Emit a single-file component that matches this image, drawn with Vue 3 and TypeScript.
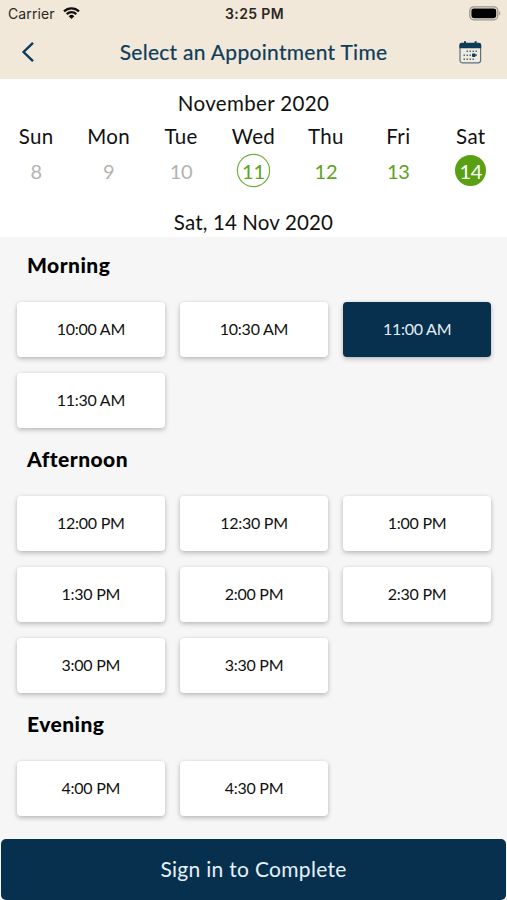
<script setup lang="ts">
import { ref } from 'vue'

interface Day {
  name: string
  date: number
  state: 'past' | 'today' | 'open' | 'selected'
}

interface Period {
  title: string
  slots: string[]
}

const days: Day[] = [
  { name: 'Sun', date: 8, state: 'past' },
  { name: 'Mon', date: 9, state: 'past' },
  { name: 'Tue', date: 10, state: 'past' },
  { name: 'Wed', date: 11, state: 'today' },
  { name: 'Thu', date: 12, state: 'open' },
  { name: 'Fri', date: 13, state: 'open' },
  { name: 'Sat', date: 14, state: 'selected' },
]

const periods: Period[] = [
  { title: 'Morning', slots: ['10:00 AM', '10:30 AM', '11:00 AM', '11:30 AM'] },
  {
    title: 'Afternoon',
    slots: ['12:00 PM', '12:30 PM', '1:00 PM', '1:30 PM', '2:00 PM', '2:30 PM', '3:00 PM', '3:30 PM'],
  },
  { title: 'Evening', slots: ['4:00 PM', '4:30 PM'] },
]

const selectedSlot = ref('11:00 AM')
</script>

<template>
  <div class="screen">
    <header class="top">
      <div class="status">
        <div class="carrier">
          <span>Carrier</span>
          <svg class="wifi" viewBox="0 0 17 12" width="17" height="12">
            <path d="M1 4.4a10.6 10.6 0 0 1 15 0" />
            <path d="M3.7 7.1a6.8 6.8 0 0 1 9.6 0" />
            <path class="dot" d="M8.5 12 5.7 9.2a4 4 0 0 1 5.6 0Z" />
          </svg>
        </div>
        <div class="clock">3:25 PM</div>
        <svg class="battery" viewBox="0 0 32 15" width="32" height="15">
          <rect x="0.8" y="0.8" width="28" height="13" rx="4" fill="none" stroke="#9b958b" stroke-width="1.3" />
          <rect x="2.4" y="2.4" width="24.8" height="9.8" rx="2.4" fill="#000" />
          <path d="M30.2 5v4.6c1.500-.8 1.500-3.800 0-4.600Z" fill="#9b958b" />
        </svg>
      </div>
      <div class="nav">
        <button class="icon-button" aria-label="Back">
          <svg viewBox="0 0 14 20" width="14" height="20">
            <path d="M12 .8 2.600 10l9.400 9.200" fill="none" stroke="#0d3c5a" stroke-width="2.4" />
          </svg>
        </button>
        <h1 class="title">Select an Appointment Time</h1>
        <button class="icon-button end" aria-label="Calendar">
          <svg viewBox="0 0 23 23" width="23" height="23">
            <rect x="1" y="2.5" width="20.6" height="19.3" rx="2.2" fill="#f1ebdf" stroke="#5b7281" stroke-width="1.2" />
            <path d="M.4 7.2V4A2.2 2.2 0 0 1 2.6 1.800h17.400A2.200 2.200 0 0 1 22.200 4v3.200Z" fill="#0d3c5a" />
            <path d="M6 .3v3M16.600.3v3" stroke="#0d3c5a" stroke-width="2" />
            <g stroke="#52697a" stroke-width="1.5" stroke-dasharray="1.5 1.5">
              <path d="M7.500 10.200h12" />
              <path d="M4.500 14.200h15" />
              <path d="M4.500 18.200h12" />
            </g>
            <rect x="13" y="12.500" width="3.600" height="3.400" rx=".8" fill="#0d3c5a" />
          </svg>
        </button>
      </div>
    </header>

    <section class="calendar">
      <div class="month">November 2020</div>
      <div class="week">
        <div v-for="day in days" :key="day.date" class="day">
          <span class="day-name">{{ day.name }}</span>
          <span class="date" :class="day.state">{{ day.date }}</span>
        </div>
      </div>
      <div class="chosen">Sat, 14 Nov 2020</div>
    </section>

    <main class="times">
      <section v-for="period in periods" :key="period.title" class="period">
        <h2 class="period-title">{{ period.title }}</h2>
        <div class="slots">
          <button
            v-for="slot in period.slots"
            :key="slot"
            class="slot"
            :class="{ active: slot === selectedSlot }"
            @click="selectedSlot = slot"
          >
            {{ slot }}
          </button>
        </div>
      </section>
    </main>

    <footer class="footer">
      <button class="complete">Sign in to Complete</button>
    </footer>
  </div>
</template>

<style>
body {
  margin: 0;
  background: #f6f6f6;
}
</style>

<style scoped>
.screen {
  display: flex;
  flex-direction: column;
  height: 900px;
  box-sizing: border-box;
  overflow: hidden;
  background: #f6f6f6;
  color: #111;
  font-family: Lato, 'Liberation Sans', sans-serif;
}

button {
  margin: 0;
  padding: 0;
  border: 0;
  background: none;
  font-family: inherit;
}

.top {
  flex: none;
  height: 79px;
  background: #f1e8d9;
}

.status {
  display: grid;
  grid-template-columns: 1fr auto 1fr;
  align-items: center;
  height: 27px;
  padding: 0 6px 0 8px;
  font-family: Inter, sans-serif;
  font-size: 14px;
  color: #2b2722;
}

.carrier {
  display: flex;
  align-items: center;
  gap: 8px;
  letter-spacing: 0.1px;
}

.wifi {
  margin-top: -1px;
}

.wifi path {
  fill: none;
  stroke: #111;
  stroke-width: 2.2;
}

.wifi .dot {
  fill: #111;
  stroke: none;
}

.clock {
  font-weight: 600;
  letter-spacing: 0.35px;
}

.battery {
  justify-self: end;
  margin-top: -1px;
}

.nav {
  display: grid;
  grid-template-columns: 60px 1fr 60px;
  align-items: center;
  height: 50px;
}

.icon-button {
  display: flex;
  padding-left: 21px;
}

.icon-button.end {
  padding-left: 12px;
}

.title {
  margin: 0;
  text-align: center;
  font-size: 21px;
  font-weight: 400;
  line-height: 28px;
  letter-spacing: 0.3px;
  color: #0d3c5a;
  -webkit-text-stroke: 0.2px #0d3c5a;
}

.calendar {
  flex: none;
  height: 158px;
  box-sizing: border-box;
  padding-top: 10px;
  background: #fff;
  text-align: center;
  font-size: 20.5px;
  line-height: 28px;
  letter-spacing: 0.35px;
}

.week {
  display: grid;
  grid-template-columns: repeat(7, 1fr);
  margin-top: 5px;
}

.day {
  display: flex;
  flex-direction: column;
  align-items: center;
}

.date {
  display: flex;
  align-items: center;
  justify-content: center;
  width: 31px;
  height: 31px;
  margin: 5px 0 1px;
  border-radius: 50%;
  font-size: 20px;
  line-height: 24px;
  letter-spacing: -0.2px;
}

.date.past {
  color: #b3b3b3;
}

.date.today,
.date.open {
  color: #5da321;
}

.date.today {
  box-shadow: 0 0 0 1.2px #6fb03a;
}

.date.selected {
  background: #5aa013;
  color: #fff;
}

.chosen {
  margin-top: 21px;
  letter-spacing: 0.15px;
}

.times {
  flex: 1;
  margin-top: -3px;
}

.period-title {
  height: 68px;
  margin: 0;
  padding-left: 27px;
  box-sizing: border-box;
  font-size: 21px;
  font-weight: 900;
  line-height: 62px;
  letter-spacing: 0.45px;
  color: #000;
}

.slots {
  display: grid;
  grid-template-columns: repeat(3, 1fr);
  gap: 16px 15.4px;
  padding: 0 16px 0 17px;
}

.slot {
  height: 55px;
  padding-bottom: 2px;
  border-radius: 4px;
  background: #fff;
  box-shadow: 0 2px 5px rgba(0, 0, 0, 0.24), 0 0 3px rgba(0, 0, 0, 0.06);
  color: #111;
  font-size: 16px;
  line-height: 20px;
  letter-spacing: -0.25px;
}

.slot.active {
  background: #06304e;
  color: #e4eef6;
}

.footer {
  flex: none;
  padding: 0 1px;
}

.complete {
  display: block;
  width: 100%;
  height: 61px;
  padding-bottom: 2px;
  border-radius: 5px;
  background: #06304e;
  color: #e6f1f8;
  font-size: 21px;
  letter-spacing: 0.3px;
}
</style>
